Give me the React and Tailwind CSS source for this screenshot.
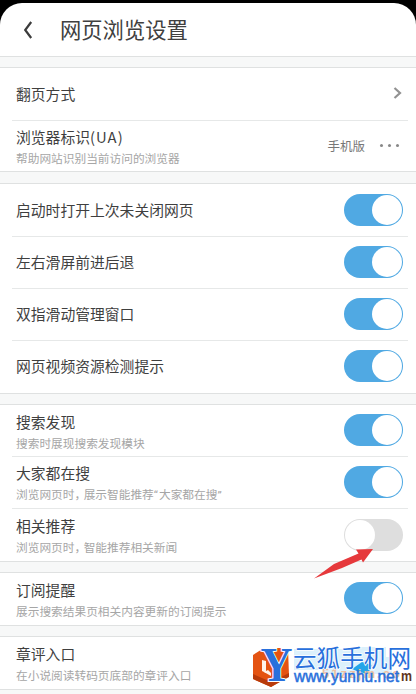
import React from "react";

function Toggle({ off = false }) {
  return (
    <span
      className={
        "flex h-[32px] w-[59px] shrink-0 items-center rounded-full p-px " +
        (off ? "justify-start bg-[#dedede]" : "mb-0.5 justify-end bg-[#50a9e3]")
      }
    >
      <span className="h-[30px] w-[30px] rounded-full bg-white" />
    </span>
  );
}

function Row({ title, note, children, height = "h-[52px]", last = false }) {
  return (
    <div className={"relative flex shrink-0 items-center justify-between pl-4 pr-[13px] " + height}>
      <div className={"flex flex-col whitespace-nowrap " + (note ? "pt-px" : "mb-0.5")}>
        <span className="text-[14.8px] leading-[22px] text-[#3f3f3f]">{title}</span>
        {note && <span className="text-[11.7px] leading-[19px] text-[#a6a6a6]">{note}</span>}
      </div>
      {children}
      {!last && <span className="absolute bottom-0 left-3 right-2 h-px bg-[#e6e8e8]" />}
    </div>
  );
}

function Gap({ height = "h-[12px]" }) {
  return <div className={"shrink-0 border-y border-[#dfe1e1] bg-[#f7f8f8] " + height} />;
}

function Comma() {
  return <span className="mr-[-2.5px]">，</span>;
}

function Watermark() {
  return (
    <svg className="absolute left-[250px] top-[636px] h-[58px] w-[166px]" viewBox="0 -4 166 58">
      <path d="M44 9h56l4-2h32v10h6v17H76l-4-4H44z" fill="#cdebfb" opacity=".7" />
      <path d="M102 29l10-7 10 3-4 9-9-2z" fill="#25a5e8" />
      <text x="72" y="38" fontSize="13" fontWeight="700" fill="#ecc0a2" fontFamily="Liberation Sans, sans-serif" textLength="78">51zzjm.co</text>
      <text x="151" y="41" fontSize="15" fontWeight="700" fill="#5e3520" fontFamily="Liberation Sans, sans-serif" textLength="11" lengthAdjust="spacingAndGlyphs">m</text>
      <path d="M3 15L14 8h24l1 28-18 11L3 39z" fill="#e45312" />
      <path d="M3 34l18 8v5L3 39zM21 42l18-9v4L21 47z" fill="#b83b0b" />
      <path d="M12 20l4 1v12l-4-2z" fill="#fff3eb" />
      <path d="M18 30l3 3v3l-7-4z" fill="#fff3eb" />
      <text x="10.5" y="41" fontSize="49" fontWeight="700" fill="#2870dc" stroke="#fff" strokeWidth="2" paintOrder="stroke" fontFamily="Liberation Serif, serif" textLength="32" lengthAdjust="spacingAndGlyphs">Y</text>
      <text x="43" y="26.5" fontSize="23.6" fill="#2870dc" stroke="#fff" strokeWidth="1.4" paintOrder="stroke" fontFamily="Noto Sans CJK SC, sans-serif" textLength="118">云狐手机网</text>
      <text x="44" y="42" fontSize="16" fill="#2870dc" stroke="#2870dc" strokeWidth=".5" fontFamily="Liberation Sans, sans-serif" textLength="105" lengthAdjust="spacingAndGlyphs">www.yunhu.net</text>
    </svg>
  );
}

export default function App() {
  return (
    <div className="relative h-[694px] w-[416px] overflow-hidden bg-black pt-[3px] font-['Noto_Sans_CJK_SC',sans-serif]">
      <div className="flex h-[691px] flex-col overflow-hidden rounded-t-[22px] bg-white">
        <header className="flex h-[53px] shrink-0 items-center pl-[23px]">
          <svg className="h-[20px] w-[10px]" viewBox="0 0 10 20" fill="none" stroke="#3c3c3c" strokeWidth="2.2">
            <path d="M8.2 2L2.2 10l6 8" />
          </svg>
          <h1 className="mb-px ml-[27px] text-[21.3px] leading-[30px] text-[#404040]">网页浏览设置</h1>
        </header>
        <Gap />
        <Row title="翻页方式" height="h-[53px]">
          <svg className="mb-[3px] mr-px h-[14px] w-[9px]" viewBox="0 0 9 14" fill="none" stroke="#929292" strokeWidth="2.2">
            <path d="M1.5 2l5.5 5-5.5 5" />
          </svg>
        </Row>
        <Row
          title={<>浏览器标识<span className="tracking-[1.1px]">(UA)</span></>}
          note="帮助网站识别当前访问的浏览器"
          height="h-[50px]"
          last
        >
          <div className="flex items-center">
            <span className="text-[12.5px] text-[#777]">手机版</span>
            <span className="mb-px ml-[15px] mr-[4px] flex gap-[5px]">
              <i className="h-[3px] w-[3px] rounded-full bg-[#888]" />
              <i className="h-[3px] w-[3px] rounded-full bg-[#888]" />
              <i className="h-[3px] w-[3px] rounded-full bg-[#888]" />
            </span>
          </div>
        </Row>
        <Gap height="h-[13px]" />
        <Row title="启动时打开上次未关闭网页" height="h-[53px]"><Toggle /></Row>
        <Row title="左右滑屏前进后退"><Toggle /></Row>
        <Row title="双指滑动管理窗口"><Toggle /></Row>
        <Row title="网页视频资源检测提示" last><Toggle /></Row>
        <Gap />
        <Row title="搜索发现" note="搜索时展现搜索发现模块"><Toggle /></Row>
        <Row
          title="大家都在搜"
          note={
            <>
              浏览网页时<Comma />展示智能推荐<span className="font-['Roboto'] tracking-[1px]">“</span>大家都在搜<span className="font-['Roboto']">”</span>
            </>
          }
        >
          <Toggle />
        </Row>
        <Row title="相关推荐" note={<>浏览网页时<Comma />智能推荐相关新闻</>} last><Toggle off /></Row>
        <Gap />
        <Row title="订阅提醒" note="展示搜索结果页相关内容更新的订阅提示" last><Toggle /></Row>
        <Gap />
        <Row title="章评入口" note="在小说阅读转码页底部的章评入口" last />
        <Gap />
      </div>
      <svg className="absolute left-[312px] top-[546px] h-[36px] w-[64px]" viewBox="0 0 64 36">
        <path d="M2 32.5L22 18 46.5 7.5 44 3.5 61 3 51 16.5 49.5 13.5 30 22z" fill="#e6393c" />
      </svg>
      <Watermark />
    </div>
  );
}
